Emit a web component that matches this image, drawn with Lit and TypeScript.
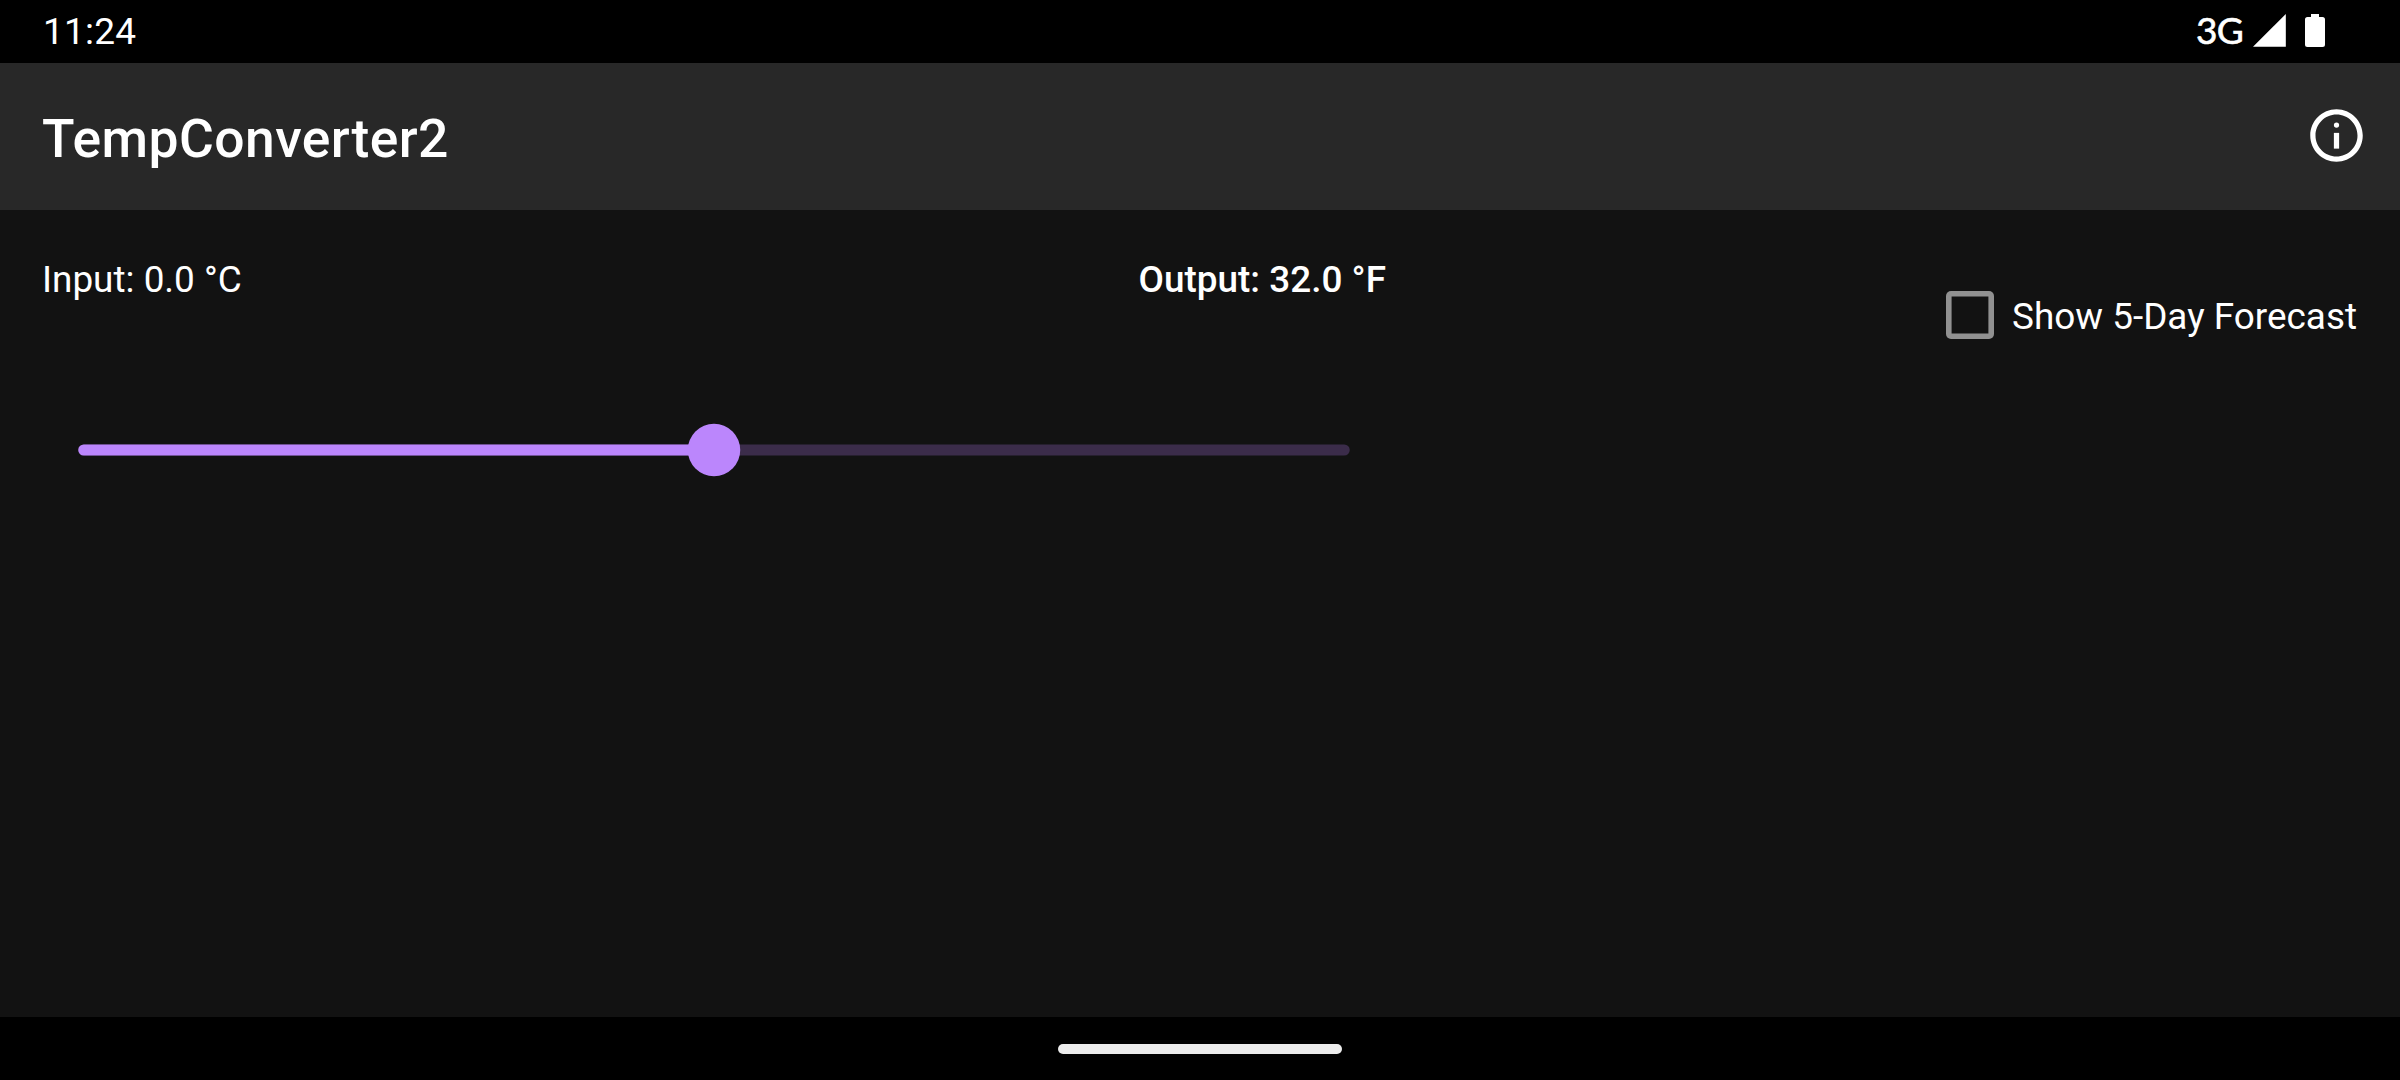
import { LitElement, html, css } from "lit";
import { customElement, state } from "lit/decorators.js";

@customElement("status-bar")
class StatusBar extends LitElement {
  static styles = css`
    :host {
      display: flex;
      align-items: center;
      justify-content: space-between;
      height: 63px;
      padding: 0 75px 0 43px;
      box-sizing: border-box;
      background: #000;
      color: #fff;
      font-size: 37px;
      line-height: 63px;
    }
    .time {
      letter-spacing: 0.2px;
    }
    .icons {
      display: flex;
      height: 63px;
    }
    .network {
      font-family: Lato, sans-serif;
      font-size: 37px;
      letter-spacing: -0.8px;
      -webkit-text-stroke: 0.6px #fff;
      margin-right: 10px;
      line-height: 60px;
    }
    .glyphs {
      display: block;
      width: 72px;
      height: 63px;
    }
  `;
  render() {
    return html`
      <span class="time">11:24</span>
      <div class="icons">
        <span class="network">3G</span>
        <svg class="glyphs" viewBox="0 0 72 63" fill="#fff">
          <path d="M0 46.8L32.8 14V46.8Z" />
          <path d="M58 14h8v3h3.5a2.5 2.5 0 0 1 2.5 2.5V44.5a2.5 2.5 0 0 1-2.5 2.5H54.500a2.500 2.500 0 0 1-2.500-2.500V19.500a2.500 2.500 0 0 1 2.500-2.500H58Z" />
        </svg>
      </div>
    `;
  }
}

@customElement("top-bar")
class TopBar extends LitElement {
  static styles = css`
    :host {
      display: flex;
      justify-content: space-between;
      height: 147px;
      padding: 0 32px 0 42px;
      box-sizing: border-box;
      background: #282828;
      color: #fff;
    }
    .title {
      margin: 0;
      padding-top: 1px;
      font-size: 53.4px;
      font-weight: 500;
      line-height: 149px;
      letter-spacing: 0.45px;
    }
    .info {
      width: 63px;
      height: 63px;
      margin-top: 41px;
    }
  `;
  render() {
    return html`
      <h1 class="title">TempConverter2</h1>
      <svg class="info" viewBox="0 0 24 24" fill="#fff">
        <path d="M12 2C6.480 2 2 6.480 2 12s4.480 10 10 10 10-4.480 10-10S17.520 2 12 2zm0 18c-4.410 0-8-3.590-8-8s3.590-8 8-8 8 3.590 8 8-3.590 8-8 8z" />
        <path d="M11 11h2v6h-2z" />
        <circle cx="12" cy="8" r="1" />
      </svg>
    `;
  }
}

@customElement("temp-slider")
class TempSlider extends LitElement {
  static properties = { percent: { type: Number } };
  declare percent: number;
  static styles = css`
    :host {
      display: block;
      height: 54px;
    }
    .track {
      display: block;
      width: 1344px;
      height: 54px;
    }
    .rest {
      fill: #3b2c4a;
    }
    .active,
    .thumb {
      fill: #bb86fc;
    }
  `;
  render() {
    const start = 36.25;
    const length = 1271.5;
    const reach = (length * this.percent) / 100;
    return html`
      <svg class="track" viewBox="0 0 1344 54">
        <rect class="rest" x=${start} y="21.500" width=${length} height="11" rx="5.500" />
        <rect class="active" x=${start} y="21.500" width=${reach} height="11" rx="5.500" />
        <circle class="thumb" cx=${start + reach} cy="27" r="26.250" />
      </svg>
    `;
  }
}

@customElement("app-root")
class AppRoot extends LitElement {
  @state() celsius = 0;

  static styles = css`
    :host {
      display: flex;
      flex-direction: column;
      height: 1080px;
      overflow: hidden;
      background: #121212;
      color: #fff;
      font-family: Roboto, sans-serif;
      font-size: 36.9px;
    }
    .content {
      flex: 1;
      display: flex;
      justify-content: space-between;
      padding: 0 43px 0 42px;
    }
    .converter {
      width: 1344px;
      padding-top: 48px;
    }
    .readings {
      display: flex;
      justify-content: space-between;
      line-height: 44px;
      margin-bottom: 121px;
    }
    .output {
      font-weight: 500;
    }
    .option {
      display: flex;
      align-items: center;
      height: 48px;
      margin-top: 81px;
      line-height: 50px;
    }
    .box {
      width: 48px;
      height: 48px;
      box-shadow: inset 0 0 0 5.6px #919191;
      border-radius: 5px;
      margin-right: 18px;
    }
    .label {
      padding-top: 4px;
    }
    .navigation {
      display: flex;
      justify-content: center;
      height: 63px;
      background: #000;
    }
    .handle {
      width: 284px;
      height: 10px;
      margin-top: 27px;
      border-radius: 5px;
      background: #ececec;
    }
  `;

  render() {
    const fahrenheit = (this.celsius * 9) / 5 + 32;
    return html`
      <status-bar></status-bar>
      <top-bar></top-bar>
      <main class="content">
        <section class="converter">
          <div class="readings">
            <span class="input">Input: ${this.celsius.toFixed(1)} °C</span>
            <span class="output">Output: ${fahrenheit.toFixed(1)} °F</span>
          </div>
          <temp-slider .percent=${50}></temp-slider>
        </section>
        <div class="option">
          <span class="box"></span>
          <span class="label">Show 5-Day Forecast</span>
        </div>
      </main>
      <div class="navigation"><div class="handle"></div></div>
    `;
  }
}
